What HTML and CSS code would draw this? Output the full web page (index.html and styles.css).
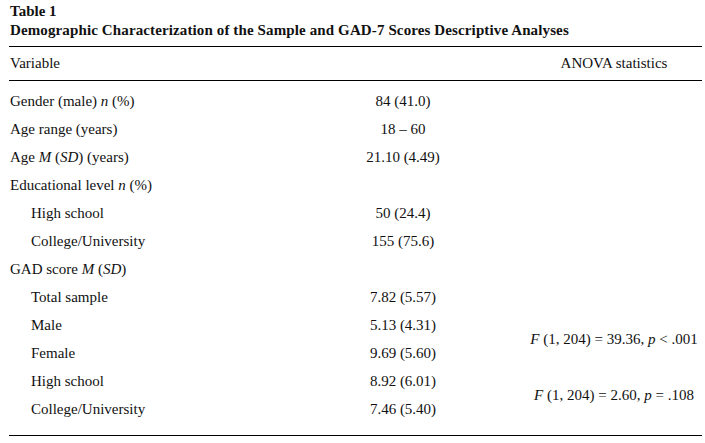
FILE: index.html
```html
<!DOCTYPE html>
<html>
<head>
<meta charset="utf-8">
<link rel="stylesheet" href="styles.css">
</head>
<body>
<div class="page">
  <div class="caption">
    <div class="label">Table 1</div>
    <div class="title">Demographic Characterization of the Sample and GAD-7 Scores Descriptive Analyses</div>
  </div>
  <div class="table-wrap">
    <table class="data">
      <colgroup>
        <col class="c-var">
        <col class="c-val">
        <col class="c-stat">
      </colgroup>
      <thead>
        <tr>
          <th class="var">Variable</th>
          <th></th>
          <th class="stat">ANOVA statistics</th>
        </tr>
      </thead>
      <tbody>
        <tr><td class="var">Gender (male) <i>n</i> (%)</td><td class="val">84 (41.0)</td><td></td></tr>
        <tr><td class="var">Age range (years)</td><td class="val">18 – 60</td><td></td></tr>
        <tr><td class="var">Age <i>M</i> (<i>SD</i>) (years)</td><td class="val">21.10 (4.49)</td><td></td></tr>
        <tr><td class="var">Educational level <i>n</i> (%)</td><td class="val"></td><td></td></tr>
        <tr><td class="var sub">High school</td><td class="val">50 (24.4)</td><td></td></tr>
        <tr><td class="var sub">College/University</td><td class="val">155 (75.6)</td><td></td></tr>
        <tr><td class="var">GAD score <i>M</i> (<i>SD</i>)</td><td class="val"></td><td></td></tr>
        <tr><td class="var sub">Total sample</td><td class="val">7.82 (5.57)</td><td></td></tr>
        <tr><td class="var sub">Male</td><td class="val">5.13 (4.31)</td><td class="stat" rowspan="2"><i>F</i> (1, 204) = 39.36, <i>p</i> &lt; .001</td></tr>
        <tr><td class="var sub">Female</td><td class="val">9.69 (5.60)</td></tr>
        <tr><td class="var sub">High school</td><td class="val">8.92 (6.01)</td><td class="stat" rowspan="2"><i>F</i> (1, 204) = 2.60, <i>p</i> = .108</td></tr>
        <tr><td class="var sub">College/University</td><td class="val">7.46 (5.40)</td></tr>
      </tbody>
    </table>
  </div>
</div>
</body>
</html>
```
FILE: styles.css
```css
html, body {
  margin: 0;
  padding: 0;
  background: #fff;
}
body {
  font-family: "Liberation Serif", "Times New Roman", serif;
  font-size: 15px;
  color: #111;
}
.page {
  padding: 2px 3px 0 9px;
}
.caption {
  font-weight: bold;
  line-height: 19px;
  padding-left: 1px;
}
.title {
  letter-spacing: 0.12px;
}
.table-wrap {
  margin-top: 6px;
  width: 693px;
  border-top: 1px solid #000;
  border-bottom: 1px solid #000;
  padding-bottom: 12px;
}
.data {
  width: 100%;
  border-collapse: collapse;
  table-layout: fixed;
}
.c-var { width: 271px; }
.c-val { width: 246px; }
.c-stat { width: 176px; }
.data th {
  font-weight: normal;
  height: 33px;
  padding: 0;
  border-bottom: 1px solid #000;
}
.data td {
  height: 28px;
  padding: 0;
  white-space: nowrap;
}
.data tbody tr:first-child td {
  padding-top: 6px;
}
.var {
  text-align: left;
  padding-left: 1px !important;
}
.var.sub {
  padding-left: 22px !important;
}
.val {
  text-align: center;
}
.stat {
  text-align: center;
}
```
